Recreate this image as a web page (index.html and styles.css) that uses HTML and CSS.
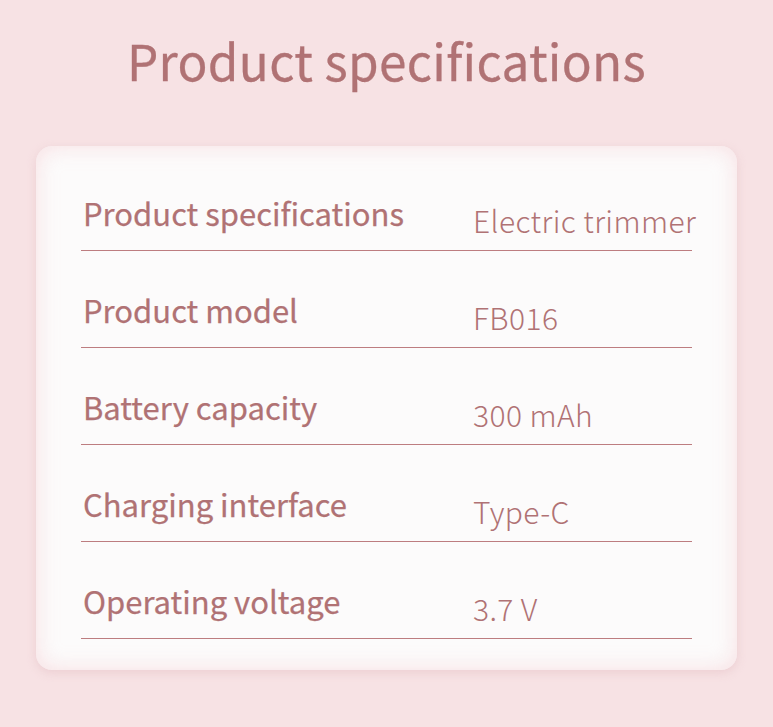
FILE: index.html
```html
<!DOCTYPE html>
<html lang="en">
<head>
<meta charset="utf-8">
<title>Product specifications</title>
<link rel="stylesheet" href="styles.css">
</head>
<body>
<main class="page">
  <h1 class="title">Product specifications</h1>
  <section class="card">
    <div class="row"><span class="label">Product specifications</span><span class="value">Electric trimmer</span></div>
    <div class="row"><span class="label">Product model</span><span class="value">FB016</span></div>
    <div class="row"><span class="label">Battery capacity</span><span class="value">300 mAh</span></div>
    <div class="row"><span class="label">Charging interface</span><span class="value">Type-C</span></div>
    <div class="row"><span class="label">Operating voltage</span><span class="value">3.7 V</span></div>
  </section>
</main>
</body>
</html>
```
FILE: styles.css
```css
html, body {
  margin: 0;
  padding: 0;
  background: #f7e2e4;
}
.page {
  width: 773px;
  height: 727px;
  box-sizing: border-box;
  padding: 30px 36px 0;
  font-family: "Noto Sans CJK SC", "Noto Sans", sans-serif;
  color: #b07274;
}
.title {
  margin: 0;
  font-size: 49.5px;
  line-height: 60px;
  font-weight: 400;
  text-align: center;
  letter-spacing: 0.3px;
  -webkit-text-stroke: 0.3px #b07274;
}
.card {
  margin-top: 56px;
  height: 524px;
  box-sizing: border-box;
  padding: 8px 45px 0;
  background: #fcfbfb;
  border-radius: 16px;
  box-shadow: inset 0 0 22px rgba(246, 214, 218, 0.75), 0 3px 10px rgba(225, 185, 190, 0.45);
}
.row {
  display: flex;
  align-items: flex-end;
  height: 97px;
  box-sizing: border-box;
  border-bottom: 1px solid #bd7d80;
}
.label {
  width: 390px;
  flex: none;
  font-size: 31px;
  line-height: 36px;
  font-weight: 400;
  -webkit-text-stroke: 0.25px #b07274;
  margin-bottom: 19px;
  padding-left: 2px;
}
.value {
  white-space: nowrap;
  font-size: 30px;
  line-height: 36px;
  font-weight: 300;
  letter-spacing: 0.4px;
  margin-bottom: 12px;
}
```
